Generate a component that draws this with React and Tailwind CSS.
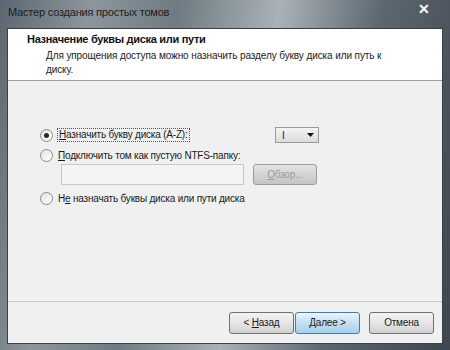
import React from 'react';

const font = { fontFamily: '"Liberation Sans", "Noto Sans", sans-serif' };

const Radio = ({ checked }) => (
  <span className="w-[13px] h-[13px] rounded-full border border-[#8a8a8a] bg-gradient-to-br from-[#e2e2e2] to-white flex items-center justify-center shrink-0">
    {checked && <span className="w-[5px] h-[5px] rounded-full bg-[#2a2a2a]" />}
  </span>
);

const Button = ({ children, isDefault }) => (
  <div
    className={`w-[65px] h-[22px] rounded-[3px] border flex items-center justify-center text-[10px] tracking-[-0.2px] text-[#1a1a1a] ${
      isDefault
        ? 'border-[#3c7fb1] bg-gradient-to-b from-[#eaf6fd] via-[#c4dff0] to-[#a7d0ea]'
        : 'border-[#707070] bg-gradient-to-b from-[#f2f2f2] via-[#e6e6e6] to-[#d0d0d0]'
    }`}
  >
    {children}
  </div>
);

export default function App() {
  return (
    <div
      className="w-[450px] h-[350px] overflow-hidden flex flex-col bg-[linear-gradient(100deg,#5b6670_0%,#8d969c_18%,#6f7a82_35%,#a9b2b8_55%,#5d6770_75%,#3e4750_100%)]"
      style={font}
    >
      {/* Title bar */}
      <div className="h-[28px] flex items-center justify-between pl-[8px] pr-[20px] shrink-0">
        <span className="text-[11px] tracking-[-0.2px] text-[#1c1c1c] -mt-[3px]">Мастер создания простых томов</span>
        <span className="text-white text-[14px] font-bold leading-none -mt-[10px]">✕</span>
      </div>

      {/* Client area */}
      <div className="flex-1 mx-[7px] mb-[6px] border border-[#3a4048] bg-[#f0f0f0] flex flex-col">
        {/* Header */}
        <div className="bg-white border-b border-[#a0a0a0] h-[52px] pl-[19px] pt-[2px]">
          <div className="text-[11px] font-bold tracking-[-0.3px] text-[#111]">Назначение буквы диска или пути</div>
          <div className="pl-[19px] text-[10px] tracking-[-0.1px] text-[#222] leading-[14px] mt-[1px] pr-[50px]">
            Для упрощения доступа можно назначить разделу букву диска или путь к диску.
          </div>
        </div>

        {/* Body */}
        <div className="flex-1 pl-[32px] pt-[45px] text-[10px] tracking-[-0.2px] text-[#1a1a1a]">
          <div className="flex items-center h-[18px]">
            <div className="w-[235px] flex items-center">
              <Radio checked />
              <span className="ml-[4px] px-[1px] border border-dotted border-[#555] leading-[12px]">
                <u>Н</u>азначить букву диска (A-Z):
              </span>
            </div>
            <div className="w-[44px] h-[16px] border border-[#9a9a9a] bg-gradient-to-b from-[#f4f4f4] to-[#dcdcdc] flex items-center justify-between pl-[6px] pr-[4px]">
              <span>I</span>
              <svg width="7" height="4" viewBox="0 0 7 4"><path d="M0 0h7L3.5 4z" fill="#111" /></svg>
            </div>
          </div>

          <div className="flex items-center h-[18px] mt-[2px]">
            <Radio />
            <span className="ml-[5px]">
              <u>П</u>одключить том как пустую NTFS-папку:
            </span>
          </div>
          <div className="flex items-center ml-[21px]">
            <div className="w-[183px] h-[21px] border border-[#c8c8c8] bg-[#f4f4f4]" />
            <div className="ml-[9px] w-[64px] h-[21px] rounded-[3px] border border-[#9a9a9a] bg-gradient-to-b from-[#e4e4e4] via-[#d4d4d4] to-[#c4c4c4] flex items-center justify-center text-[#9a9a9a]">
              <u>О</u>бзор...
            </div>
          </div>

          <div className="flex items-center h-[18px] mt-[4px]">
            <Radio />
            <span className="ml-[5px]">
              Н<u>е</u> назначать буквы диска или пути диска
            </span>
          </div>
        </div>

        {/* Footer */}
        <div className="border-t border-[#c8c8c8] h-[42px] flex items-center justify-end pr-[8px] shrink-0">
          <Button>&lt;&nbsp;<u>Н</u>азад</Button>
          <div className="ml-[1px]">
            <Button isDefault>
              <u>Д</u>алее &gt;
            </Button>
          </div>
          <div className="ml-[9px]">
            <Button>Отмена</Button>
          </div>
        </div>
      </div>
    </div>
  );
}
